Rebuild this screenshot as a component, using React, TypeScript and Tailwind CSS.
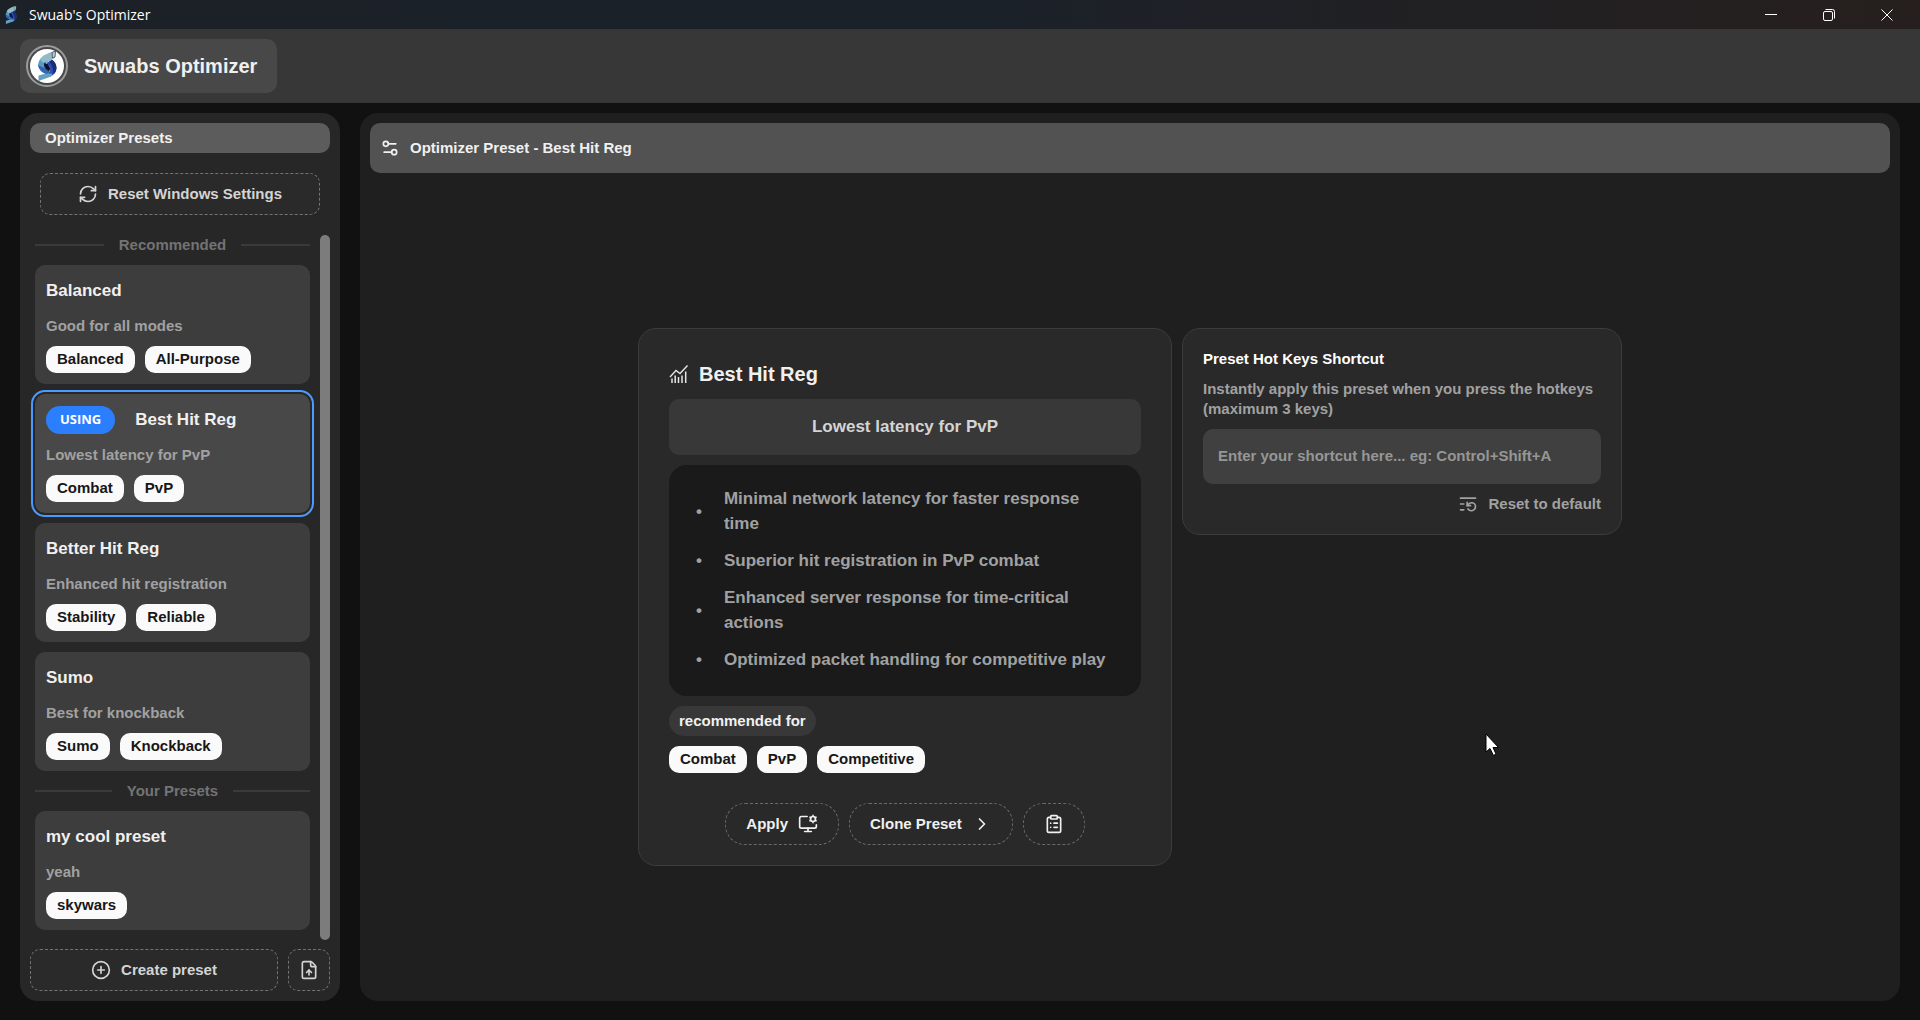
import { useState } from 'react';
import {
  ChevronRight,
  CirclePlus,
  ClipboardList,
  FileUp,
  ListRestart,
  RefreshCw,
  Settings2,
} from 'lucide-react';

interface Preset {
  id: string;
  name: string;
  description: string;
  tags: string[];
}

const recommendedPresets: Preset[] = [
  { id: 'balanced', name: 'Balanced', description: 'Good for all modes', tags: ['Balanced', 'All-Purpose'] },
  { id: 'best-hit-reg', name: 'Best Hit Reg', description: 'Lowest latency for PvP', tags: ['Combat', 'PvP'] },
  { id: 'better-hit-reg', name: 'Better Hit Reg', description: 'Enhanced hit registration', tags: ['Stability', 'Reliable'] },
  { id: 'sumo', name: 'Sumo', description: 'Best for knockback', tags: ['Sumo', 'Knockback'] },
];

const userPresets: Preset[] = [
  { id: 'my-cool-preset', name: 'my cool preset', description: 'yeah', tags: ['skywars'] },
];

const features = [
  'Minimal network latency for faster response time',
  'Superior hit registration in PvP combat',
  'Enhanced server response for time-critical actions',
  'Optimized packet handling for competitive play',
];

function Logo({ className }: { className: string }) {
  return (
    <svg viewBox="0 0 40 62" className={className} aria-hidden="true">
      <path d="M37 1 L36 14 L23 21 Q14 27 17 35 L25 42 L21 48 Q4 43 2 29 Q3 18 14 10 Q24 4 37 1 Z" fill="#5a9bc4" />
      <path d="M37 1 L36 14 L23 21 L12 24 L6 18 Q9 13 14 10 Q24 4 37 1 Z" fill="#93bcc6" />
      <path d="M2 29 Q9 33 17 35 L25 42 L21 48 Q4 43 2 29 Z" fill="#3566b4" />
      <path d="M14 25 L22 27 L27 36 L24 42 L17 36 Q13 31 14 25 Z" fill="#0d1430" />
      <path d="M19 25 L30 18 Q39 25 39 36 Q38 47 27 52 L15 54 Q27 44 26 36 Q25 30 19 25 Z" fill="#2a4dae" />
      <path d="M31 19 Q39 26 39 36 Q38 43 33 48 Q33 33 25 22 Z" fill="#1d2c74" />
      <path d="M3 50 Q17 45 29 46 L31 50 Q25 54 17 56 L3 61 Z" fill="#64a0c2" />
      <path d="M30 4 L37 1 L36 13 L31 15 Z" fill="#bcd0d2" stroke="#33474f" strokeWidth="1.5" />
    </svg>
  );
}

// rising line over a row of bars
function StatsIcon() {
  return (
    <svg viewBox="0 0 20 20" className="size-5 text-[#e5e5e5]" fill="none" stroke="currentColor" aria-hidden="true">
      <path d="M1 13 L7 6.5 L11 9.5 L18.5 1.5" strokeWidth="1.4" />
      <path d="M3 14.5V19M6.2 11.5V19M9.5 13V19M13 11.5V19M16.7 7.5V19" strokeWidth="1.5" />
    </svg>
  );
}

// monitor with a small gear in its top right corner
function MonitorGearIcon() {
  return (
    <svg
      viewBox="0 0 24 24"
      className="size-5"
      fill="none"
      stroke="currentColor"
      strokeWidth="2"
      strokeLinecap="round"
      strokeLinejoin="round"
      aria-hidden="true"
    >
      <path d="M11 3H4a2 2 0 0 0-2 2v10a2 2 0 0 0 2 2h16a2 2 0 0 0 2-2v-2" />
      <path d="M12 17v4M8 21h8" />
      <circle cx="18" cy="6" r="3" />
      <path strokeWidth="1.8" d="M18 1.6V3M18 9v1.4M14.2 3.8l1.2.7M20.600 7.500l1.200.7M14.200 8.200l1.200-.7M20.600 4.500l1.200-.7" />
    </svg>
  );
}

function Tag({ label }: { label: string }) {
  return (
    <span className="rounded-[10px] bg-neutral-50 px-[11px] pt-[2px] pb-1 text-[15px] leading-[21px] text-neutral-900">
      {label}
    </span>
  );
}

function Divider({ label }: { label: string }) {
  return (
    <div className="flex items-center gap-[15px] text-[15px] leading-5 text-[#737373]">
      <span className="h-[2px] flex-1 bg-[#3a3a3a]" />
      {label}
      <span className="h-[2px] flex-1 bg-[#3a3a3a]" />
    </div>
  );
}

interface PresetCardProps {
  preset: Preset;
  active: boolean;
  onSelect: () => void;
}

function PresetCard({ preset, active, onSelect }: PresetCardProps) {
  return (
    <button
      type="button"
      onClick={onSelect}
      className={`flex flex-col gap-[10px] rounded-[10px] p-[11px] text-left ${
        active ? 'bg-[#484848] outline-2 outline-offset-2 outline-[#4a9bff]' : 'bg-[#3d3d3d]'
      }`}
    >
      <span className="flex h-[30px] items-center gap-5">
        {active && (
          <span className="rounded-full bg-[#2b7fff] px-[14px] pt-[3px] pb-[5px] font-['Open_Sans',sans-serif] text-[13px] leading-5 text-white">
            USING
          </span>
        )}
        <span className="text-[17px] leading-[26px] text-[#f0f0f0]">{preset.name}</span>
      </span>
      <span className="text-[15px] leading-5 text-[#a1a1a1]">{preset.description}</span>
      <span className="flex gap-[10px]">
        {preset.tags.map((tag) => (
          <Tag key={tag} label={tag} />
        ))}
      </span>
    </button>
  );
}

function TitleBar() {
  return (
    <div className="flex h-[29px] items-center bg-linear-to-r from-[#1b2127] via-[#1b2129] to-[#261f1d] pr-1 pl-[5px] text-white">
      <Logo className="h-5 w-3" />
      <span className="ml-3 flex-1 font-['Open_Sans',sans-serif] text-[14px] leading-5 font-normal">Swuab's Optimizer</span>
      <button type="button" aria-label="Minimize" className="flex h-full w-[58px] items-center justify-center">
        <svg viewBox="0 0 12 12" className="size-3" stroke="currentColor" fill="none">
          <path d="M0 5.5H12" />
        </svg>
      </button>
      <button type="button" aria-label="Restore" className="flex h-full w-[58px] items-center justify-center">
        <svg viewBox="0 0 12 12" className="size-3" stroke="currentColor" fill="none">
          <rect x="0.5" y="2.5" width="9" height="9" rx="1.5" />
          <path d="M2.5 0.5H9.5Q11.5 0.5 11.5 2.5V9.5" />
        </svg>
      </button>
      <button type="button" aria-label="Close" className="flex h-full w-[58px] items-center justify-center">
        <svg viewBox="0 0 12 12" className="size-3" stroke="currentColor" fill="none">
          <path d="M0.5 0.5L11.5 11.5M11.5 0.5L0.5 11.5" />
        </svg>
      </button>
    </div>
  );
}

interface SidebarProps {
  selected: string;
  onSelect: (id: string) => void;
}

function Sidebar({ selected, onSelect }: SidebarProps) {
  return (
    <aside className="flex w-80 shrink-0 flex-col rounded-[18px] bg-[#272727] p-[10px] text-[15px]">
      <h2 className="rounded-[10px] bg-[#5c5c5c] px-[15px] py-[5px] leading-5 text-[#f0f0f0]">Optimizer Presets</h2>
      <button
        type="button"
        className="mx-[10px] my-5 flex h-[42px] items-center justify-center gap-[10px] rounded-[10px] border border-dashed border-[#737373] bg-[#2a2a2a] text-[#d4d4d4]"
      >
        <RefreshCw className="size-5" />
        Reset Windows Settings
      </button>

      <div className="flex gap-[10px] pl-[5px]">
        <div className="flex flex-1 flex-col gap-[10px] pb-[10px]">
          <Divider label="Recommended" />
          {recommendedPresets.map((preset) => (
            <PresetCard
              key={preset.id}
              preset={preset}
              active={preset.id === selected}
              onSelect={() => onSelect(preset.id)}
            />
          ))}
          <Divider label="Your Presets" />
          {userPresets.map((preset) => (
            <PresetCard
              key={preset.id}
              preset={preset}
              active={preset.id === selected}
              onSelect={() => onSelect(preset.id)}
            />
          ))}
        </div>
        <div className="w-[10px] rounded-full bg-[#7c7c7c]" />
      </div>

      <div className="mt-auto flex gap-[10px] pt-[9px] text-[#d4d4d4]">
        <button
          type="button"
          className="flex h-[42px] flex-1 items-center justify-center gap-[10px] rounded-[10px] border border-dashed border-[#737373] bg-[#2a2a2a]"
        >
          <CirclePlus className="size-5" />
          Create preset
        </button>
        <button
          type="button"
          aria-label="Import preset"
          className="flex size-[42px] items-center justify-center rounded-[10px] border border-dashed border-[#737373] bg-[#2a2a2a]"
        >
          <FileUp className="size-5" />
        </button>
      </div>
    </aside>
  );
}

function PresetDetails() {
  return (
    <section className="flex w-[534px] flex-col gap-[10px] rounded-[18px] border border-[#3c3c3c] bg-[#292929] px-[30px] pt-[30px] pb-5 text-[15px] text-[#f0f0f0]">
      <h2 className="flex items-center gap-[10px] text-xl leading-[30px]">
        <StatsIcon />
        Best Hit Reg
      </h2>
      <p className="rounded-[10px] bg-[#383838] py-[15px] text-center text-[17px] leading-[26px] text-[#d4d4d4]">
        Lowest latency for PvP
      </p>
      <ul className="flex flex-col gap-3 rounded-[18px] bg-[#1a1a1a] pt-[21px] pr-7 pb-6 pl-[27px] text-[17px] leading-[25px] text-[#a1a1a1]">
        {features.map((feature) => (
          <li key={feature} className="flex items-center gap-[22px]">
            <span>•</span>
            <span>{feature}</span>
          </li>
        ))}
      </ul>
      <h3 className="self-start rounded-full bg-[#383838] px-[10px] py-[5px] leading-5">recommended for</h3>
      <div className="flex gap-[10px]">
        <Tag label="Combat" />
        <Tag label="PvP" />
        <Tag label="Competitive" />
      </div>
      <div className="mt-5 flex justify-center gap-[10px]">
        <button type="button" className="flex h-[42px] items-center gap-[10px] rounded-[20px] border border-dashed border-[#6a6a6a] px-5">
          Apply
          <MonitorGearIcon />
        </button>
        <button type="button" className="flex h-[42px] items-center gap-[10px] rounded-[20px] border border-dashed border-[#6a6a6a] px-5">
          Clone Preset
          <ChevronRight className="size-5" />
        </button>
        <button
          type="button"
          aria-label="Copy preset"
          className="flex h-[42px] items-center rounded-[20px] border border-dashed border-[#6a6a6a] px-5"
        >
          <ClipboardList className="size-5" />
        </button>
      </div>
    </section>
  );
}

function HotKeys() {
  const [shortcut, setShortcut] = useState('');

  return (
    <section className="flex w-[440px] flex-col gap-[10px] rounded-[18px] border border-[#3c3c3c] bg-[#292929] p-5 text-[15px] leading-5 text-[#a1a1a1]">
      <label htmlFor="shortcut" className="text-white">
        Preset Hot Keys Shortcut
      </label>
      <p>Instantly apply this preset when you press the hotkeys (maximum 3 keys)</p>
      <input
        id="shortcut"
        type="text"
        value={shortcut}
        onChange={(e) => setShortcut(e.target.value)}
        placeholder="Enter your shortcut here... eg: Control+Shift+A"
        className="h-[55px] w-full rounded-[10px] bg-[#404040] px-[15px] pb-[2px] placeholder:text-[#969696]"
      />
      <button type="button" onClick={() => setShortcut('')} className="flex items-center gap-[10px] self-end">
        <ListRestart className="size-5" />
        Reset to default
      </button>
    </section>
  );
}

export default function App() {
  const [selected, setSelected] = useState('best-hit-reg');

  return (
    <div className="relative flex min-h-screen flex-col bg-[#111111] font-['Liberation_Sans',Arial,sans-serif] font-bold">
      <TitleBar />
      <header className="flex bg-[#373737] px-5 py-[10px]">
        <div className="flex items-center gap-4 rounded-[10px] bg-[#484848] py-[6px] pr-5 pl-[6px]">
          <div className="flex size-[42px] items-center justify-center rounded-full border-2 border-[#9b9b9b] p-[2px]">
            <div className="flex size-full items-center justify-center rounded-full bg-white">
              <Logo className="h-8 w-5" />
            </div>
          </div>
          <h1 className="text-xl leading-[30px] text-[#f0f0f0]">Swuabs Optimizer</h1>
        </div>
      </header>

      <div className="flex flex-1 gap-5 px-5 pt-[10px] pb-[19px]">
        <Sidebar selected={selected} onSelect={setSelected} />
        <main className="flex flex-1 flex-col rounded-[18px] bg-[#1f1f1f] p-[10px]">
          <div className="flex h-[50px] items-center gap-[10px] rounded-[10px] bg-[#525252] px-[10px] text-[15px] text-[#f0f0f0]">
            <Settings2 className="size-5" />
            Optimizer Preset - Best Hit Reg
          </div>
          <div className="flex flex-1 items-center justify-center pt-[30px]">
            <div className="flex items-start gap-[10px]">
              <PresetDetails />
              <HotKeys />
            </div>
          </div>
        </main>
      </div>

      {/* mouse pointer */}
      <svg viewBox="0 0 15 24" className="pointer-events-none absolute top-[733px] left-[1485px] h-6 w-[15px]" aria-hidden="true">
        <path d="M1 1V19L5 15.5L8.500 22.500L11 21L8 14.500H13.500Z" fill="#fff" stroke="#000" strokeWidth="1" />
      </svg>
    </div>
  );
}
